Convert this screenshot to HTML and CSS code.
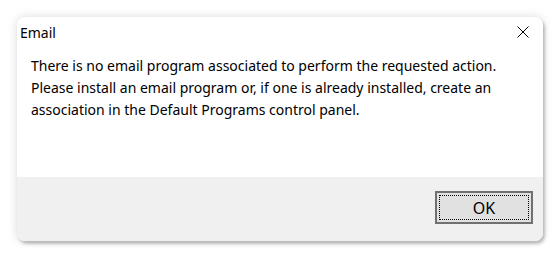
FILE: index.html
```html
<!doctype html>
<html>
<head>
    <meta charset="utf-8">
    <link rel="stylesheet" href="styles.css">
</head>
<body>
    <div class="dialog">
        <div class="titlebar">
            <span class="title">Email</span>
            <span class="close">
                <svg width="12" height="12" viewBox="0 0 12 12">
                    <path d="M0.5 0.5 L11.5 11.5 M11.5 0.5 L0.5 11.5" stroke="#000" stroke-width="1" fill="none"/>
                </svg>
            </span>
        </div>
        <div class="content">
            <p class="message">There is no email program associated to perform the requested action.
                Please install an email program or, if one is already installed, create an
                association in the Default Programs control panel.</p>
        </div>
        <div class="footer">
            <button class="btn">OK</button>
        </div>
    </div>
</body>
</html>
```

FILE: styles.css
```css
html, body {
    margin: 0;
    background: #fff;
    font-family: 'Noto Sans', sans-serif;
}

body {
    padding: 17px;
}

.dialog {
    width: 526px;
    height: 224px;
    border-radius: 8px;
    background: #fff;
    box-shadow: 2px 3px 3px rgba(0, 0, 0, 0.22), 0 0 10px rgba(0, 0, 0, 0.15);
    display: flex;
    flex-direction: column;
    overflow: hidden;
}

.titlebar {
    height: 30px;
    display: flex;
    align-items: center;
    justify-content: space-between;
    padding: 0 14px 0 3px;
}

.title {
    font-size: 14px;
    color: #000;
}

.close {
    display: flex;
}

.content {
    flex: 1;
    padding: 8px 14px 0 14px;
}

.message {
    margin: 0;
    font-size: 14px;
    line-height: 22px;
    color: #000;
}

.footer {
    height: 64px;
    background: #f0f0f0;
    display: flex;
    justify-content: flex-end;
    align-items: flex-start;
    padding: 14px 10px 0 0;
    box-sizing: border-box;
}

.btn {
    width: 98px;
    height: 33px;
    border: 2px solid #707070;
    background: #e1e1e1;
    font-family: inherit;
    font-size: 16px;
    color: #000;
    outline: 1px dotted #000;
    outline-offset: -5px;
    padding: 0;
}
```
